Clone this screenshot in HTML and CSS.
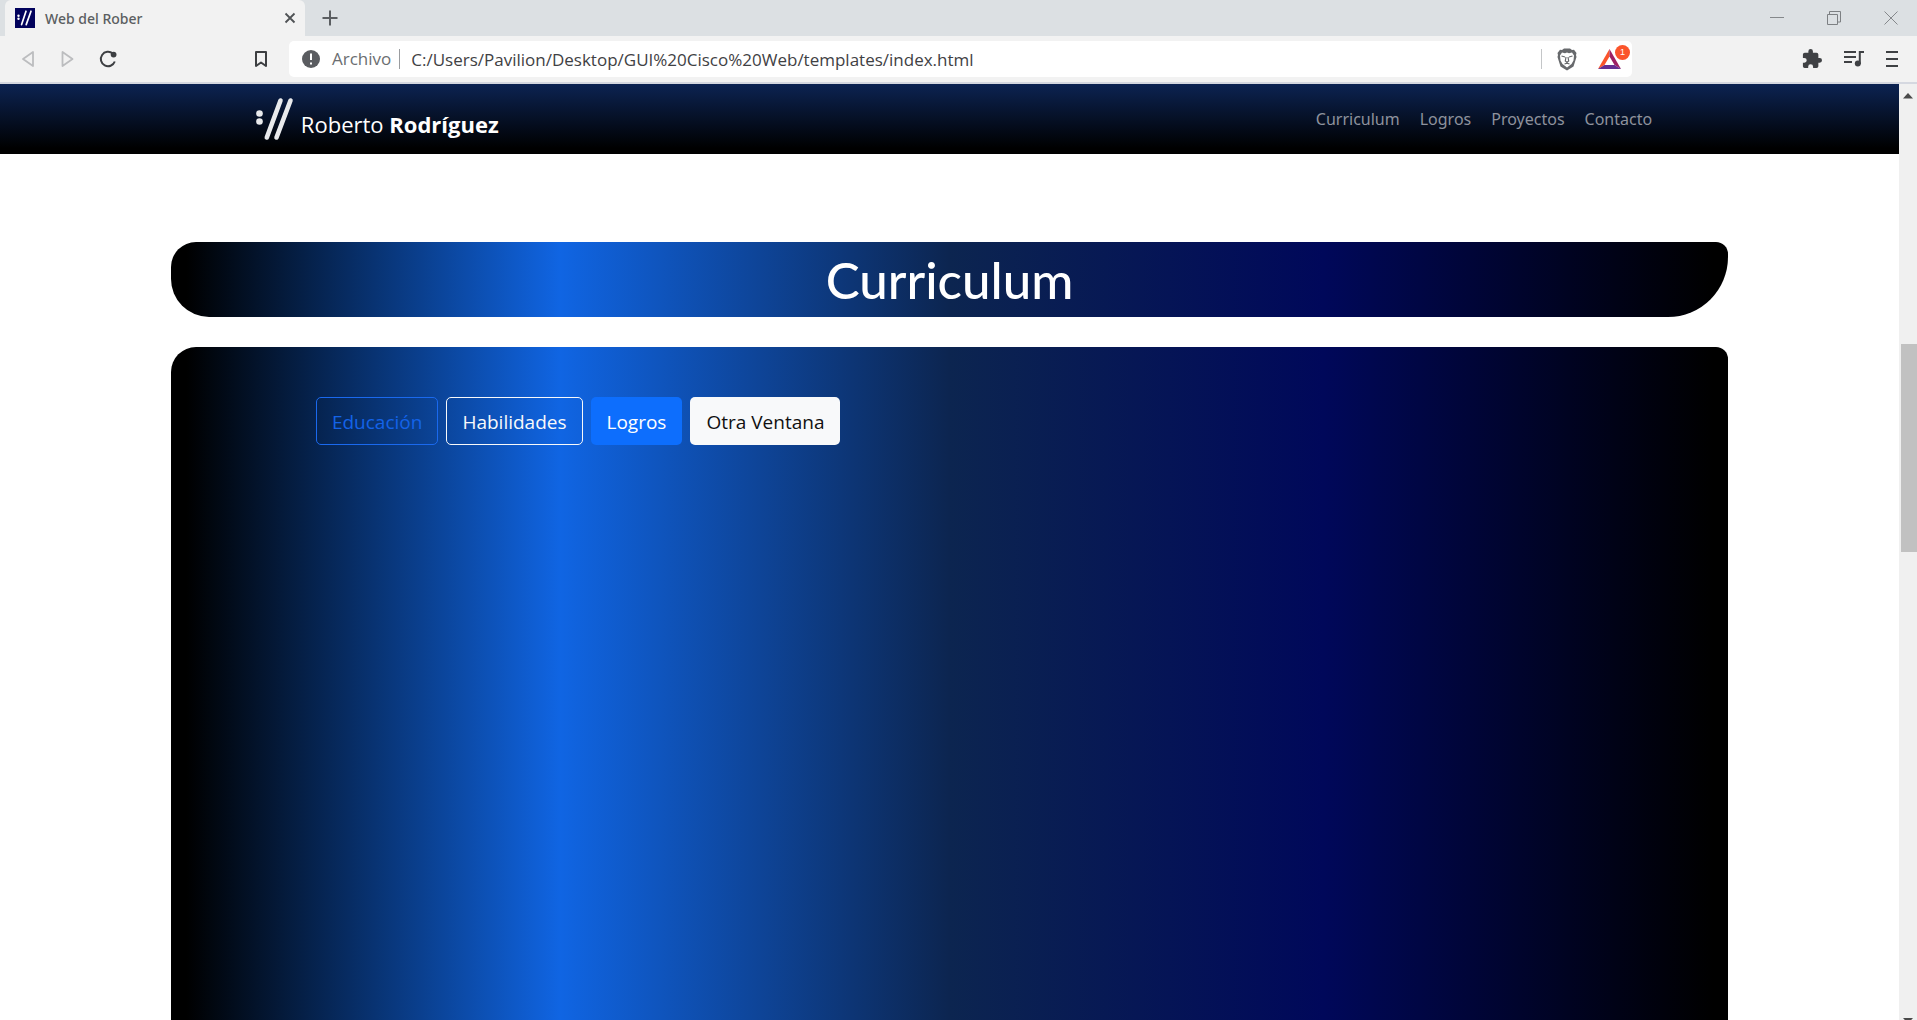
FILE: index.html
```html
<!DOCTYPE html>
<html lang="es">
<head>
<meta charset="utf-8">
<title>Web del Rober</title>
<link rel="stylesheet" href="styles.css">
</head>
<body>
<div class="window">
  <header class="browser">
    <div class="tabstrip">
      <div class="tab">
        <svg class="favicon" viewBox="0 0 20 20" width="20" height="20" aria-hidden="true"><rect width="20" height="20" fill="#02025c"/><g fill="#fff"><circle cx="3.500" cy="7.700" r="1.200"/><circle cx="3.500" cy="10.700" r="1.200"/></g><path d="M11 3.200L6.600 16.600M16 3.200L11.200 16.600" stroke="#fff" stroke-width="1.700" stroke-linecap="round"/></svg>
        <span class="tab-title">Web del Rober</span>
        <button class="icon-button" type="button" aria-label="Cerrar pestaña"><svg viewBox="0 0 12 12" width="12" height="12"><path d="M1.500 1.500l9 9M10.500 1.500l-9 9" stroke="#4f5255" stroke-width="1.800"/></svg></button>
      </div>
      <button class="icon-button new-tab" type="button" aria-label="Nueva pestaña"><svg viewBox="0 0 16 16" width="16" height="16"><path d="M8 .5v15M.5 8h15" stroke="#5b5e61" stroke-width="2"/></svg></button>
      <div class="window-controls">
        <button class="icon-button" type="button" aria-label="Minimizar"><svg viewBox="0 0 14 14" width="14" height="14"><path d="M0 6.500h14" stroke="#85888b"/></svg></button>
        <button class="icon-button" type="button" aria-label="Restaurar"><svg viewBox="0 0 14 14" width="14" height="14"><path d="M.5 3.500h10v10H.5zM2.500 3V.5h11v10.500H11" fill="none" stroke="#7d8083"/></svg></button>
        <button class="icon-button" type="button" aria-label="Cerrar"><svg viewBox="0 0 14 14" width="14" height="14"><path d="M.5.5l13 13M13.500.5l-13 13" stroke="#85888b"/></svg></button>
      </div>
    </div>
    <div class="toolbar">
      <div class="history">
        <button class="icon-button" type="button" aria-label="Atrás"><svg viewBox="0 0 14 18" width="14" height="18"><path d="M12 2v14L2 9z" fill="none" stroke="#bcbdbf" stroke-width="1.800" stroke-linejoin="round"/></svg></button>
        <button class="icon-button" type="button" aria-label="Adelante"><svg viewBox="0 0 14 18" width="14" height="18"><path d="M2.500 2v14l10-7z" fill="none" stroke="#bcbdbf" stroke-width="1.800" stroke-linejoin="round"/></svg></button>
        <button class="icon-button" type="button" aria-label="Recargar"><svg viewBox="0 0 18 18" width="18" height="18"><path d="M15.800 11.500A7.200 7.200 0 1 1 13.800 3.600" fill="none" stroke="#3d3f42" stroke-width="2"/><circle cx="14.600" cy="4.600" r="2.900" fill="#3d3f42"/></svg></button>
      </div>
      <button class="icon-button bookmark" type="button" aria-label="Marcador"><svg viewBox="0 0 14 18" width="14" height="18"><path d="M2 2h10v14l-5-3.500L2 16z" fill="none" stroke="#3d3f42" stroke-width="2" stroke-linejoin="round"/></svg></button>
      <div class="address">
        <svg viewBox="0 0 18 18" width="18" height="18" aria-hidden="true"><circle cx="9" cy="9" r="9" fill="#5a5c60"/><path d="M9 3.500v6.500M9 12.500v2" stroke="#fff" stroke-width="2"/></svg>
        <label class="scheme" for="url">Archivo</label>
        <input class="url" id="url" type="text" value="C:/Users/Pavilion/Desktop/GUI%20Cisco%20Web/templates/index.html">
        <div class="shields">
          <button class="icon-button" type="button" aria-label="Escudos"><svg viewBox="0 0 20 23" width="20" height="23"><path d="M5 2l2-1.500h6L15 2l2-.3L19.500 5 19 7l.5 2-3 9.500L10 22.500 3.500 18.500.5 9 1 7 .5 5 3 1.700z" fill="#67696c"/><path d="M5 4.500l3 .7 2-.7 2 .7 3-.7 2 3-.5 5L14.500 16 10 19.500 5.500 16 3.500 12.500 3 7.500z" fill="#fff"/><path d="M4.500 8l3.500 1M15.500 8L12 9M9 9l-.7 4L10 14.300l1.700-1.300L11 9M7.500 16l2.500-.8 2.500.8" stroke="#67696c" stroke-width="1.200" fill="none"/></svg></button>
          <button class="icon-button rewards" type="button" aria-label="Recompensas"><svg viewBox="0 0 23 20" width="23" height="20"><path d="M11.500 0L0 20l6.500-4 5-8.500z" fill="#fb542b"/><path d="M11.500 0L23 20l-6.500-4-5-8.500z" fill="#9e1f63"/><path d="M0 20h23l-6.500-4h-10z" fill="#662d91"/></svg><span class="badge">1</span></button>
        </div>
      </div>
      <div class="tools">
        <button class="icon-button" type="button" aria-label="Extensiones"><svg viewBox="1 1 22 22" width="20" height="20"><path d="M20.500 11H19V7a2 2 0 0 0-2-2h-4V3.500a2.500 2.500 0 0 0-5 0V5H4a2 2 0 0 0-2 2v3.800h1.500a2.700 2.700 0 0 1 0 5.400H2V20a2 2 0 0 0 2 2h3.800v-1.500a2.700 2.700 0 0 1 5.400 0V22H17a2 2 0 0 0 2-2v-4h1.500a2.500 2.500 0 0 0 0-5z" fill="#3f4144"/></svg></button>
        <button class="icon-button" type="button" aria-label="Multimedia"><svg viewBox="0 0 20 18" width="20" height="18"><path d="M0 2h12M0 7h12M0 12h8M15.800 14V2H20" fill="none" stroke="#3f4144" stroke-width="2"/><circle cx="13.800" cy="13.500" r="3" fill="#3f4144"/></svg></button>
        <button class="icon-button" type="button" aria-label="Menú"><svg viewBox="0 0 12 18" width="12" height="18"><path d="M0 2h12M0 9h12M0 16h12" stroke="#3f4144" stroke-width="2"/></svg></button>
      </div>
    </div>
  </header>
  <div class="viewport">
    <div class="page">
      <nav class="navbar">
        <a class="brand" href="#inicio">
          <svg viewBox="0 0 40 44" width="40" height="44" aria-hidden="true"><g fill="#e9eaec"><circle cx="4.500" cy="16.500" r="3.300"/><circle cx="4.500" cy="24.500" r="3.300"/></g><path d="M25.500 3.500L11.800 40.500M35.500 3.500L21.500 40.500" stroke="#e9eaec" stroke-width="4.600" stroke-linecap="round"/></svg>
          <span class="brand-name">Roberto <strong>Rodríguez</strong></span>
        </a>
        <div class="nav-links">
          <a href="#curriculum">Curriculum</a>
          <a href="#logros">Logros</a>
          <a href="#proyectos">Proyectos</a>
          <a href="#contacto">Contacto</a>
        </div>
      </nav>
      <main class="content" id="curriculum">
        <h1 class="banner">Curriculum</h1>
        <section class="panel">
          <button class="btn btn-outline-primary" type="button">Educación</button>
          <button class="btn btn-outline-light" type="button">Habilidades</button>
          <button class="btn btn-primary" type="button">Logros</button>
          <button class="btn btn-light" type="button">Otra Ventana</button>
        </section>
      </main>
    </div>
    <div class="scrollbar" aria-hidden="true">
      <svg class="arrow" viewBox="0 0 10 6" width="10" height="6"><path d="M0 5.500L5 0l5 5.500z" fill="#4a4a4a"/></svg>
      <div class="thumb"></div>
      <svg class="arrow arrow-down" viewBox="0 0 10 6" width="10" height="6"><path d="M0 0h10L5 5.500z" fill="#4a4a4a"/></svg>
    </div>
  </div>
</div>
</body>
</html>
```
FILE: styles.css
```css
* { box-sizing: border-box; }

body {
  margin: 0;
  font-family: "Noto Sans", "Open Sans", sans-serif;
  background: #fff;
}

.window {
  display: flex;
  flex-direction: column;
  height: 100vh;
  overflow: hidden;
}

.icon-button {
  display: flex;
  align-items: center;
  justify-content: center;
  padding: 0;
  border: 0;
  background: none;
}

/* Browser frame */
.browser {
  flex: none;
  background: #f2f2f2;
  border-bottom: 2px solid #d5d8e0;
}

.tabstrip {
  display: flex;
  align-items: center;
  height: 36px;
  padding-left: 5px;
  background: #dce0e3;
}

.tab {
  display: flex;
  align-items: center;
  gap: 10px;
  width: 300px;
  height: 36px;
  padding: 0 9px 0 10px;
  border-radius: 6px 6px 0 0;
  background: #f2f2f2;
}

.tab-title {
  flex: 1;
  font-size: 14px;
  font-weight: 500;
  color: #5b5e61;
}

.new-tab { margin-left: 17px; }

.window-controls {
  display: flex;
  gap: 43px;
  margin-left: auto;
  padding-right: 19px;
}

.toolbar {
  display: flex;
  align-items: center;
  height: 46px;
  padding: 0 19px 0 21px;
}

.history {
  display: flex;
  align-items: center;
  gap: 25px;
}

.bookmark { margin-left: 137px; }

.address {
  display: flex;
  flex: 1;
  align-items: center;
  height: 36px;
  margin-left: 21px;
  padding: 0 9px 0 13px;
  border-radius: 5px;
  background: #fff;
  font-family: "Open Sans", "Noto Sans", sans-serif;
  font-size: 17px;
}

.scheme {
  margin-left: 12px;
  padding-right: 8px;
  border-right: 1px solid #9a9c9f;
  line-height: 20px;
  color: #6b6e71;
}

.url {
  flex: 1;
  min-width: 0;
  margin-left: 11px;
  padding: 0;
  border: 0;
  background: none;
  font: inherit;
  color: #3f4144;
}

.shields {
  display: flex;
  align-items: center;
  gap: 21px;
  height: 20px;
  padding: 0 2px 0 15px;
  border-left: 1px solid #c4c6c8;
}

.rewards {
  position: relative;
  width: 23px;
}

.badge {
  position: absolute;
  top: -4px;
  right: -9px;
  width: 15px;
  height: 15px;
  border-radius: 8px;
  background: #fb542b;
  font-size: 9px;
  line-height: 15px;
  text-align: center;
  color: #fff;
}

.tools {
  display: flex;
  align-items: center;
  gap: 22px;
  margin-left: 170px;
}

/* Page area */
.viewport {
  display: flex;
  flex: 1;
  min-height: 0;
}

.page {
  display: flex;
  flex: 1;
  flex-direction: column;
  min-width: 0;
}

.scrollbar {
  display: flex;
  flex: none;
  flex-direction: column;
  align-items: center;
  width: 18px;
  padding: 9px 0 0;
  background: #f0f0f0;
  overflow: hidden;
}

.thumb {
  width: 16px;
  height: 208px;
  margin: 245px 0 auto;
  align-self: flex-end;
  background: #c1c1c1;
}

.arrow { flex: none; }
.arrow-down { margin-bottom: -4px; }

.navbar {
  display: flex;
  flex: none;
  align-items: center;
  justify-content: space-between;
  height: 70px;
  padding: 0 13%;
  background: linear-gradient(#0c2352, #000 92%);
}

.brand {
  display: flex;
  align-items: center;
  gap: 6px;
  padding-left: 8px;
  font-family: "Open Sans", "Noto Sans", sans-serif;
  font-size: 22px;
  color: #fff;
  text-decoration: none;
}

.brand-name { padding-top: 10px; }

.nav-links {
  display: flex;
  gap: 20px;
}

.nav-links a {
  font-size: 16px;
  line-height: 24px;
  color: #8e929d;
  text-decoration: none;
}

.content {
  display: flex;
  flex: 1;
  flex-direction: column;
  gap: 30px;
  min-height: 0;
  padding: 88px 9% 0;
}

.banner,
.panel {
  background: linear-gradient(90deg, #000 1%, #1065e3 25%, #0c2550 50%, #00085a 74%, #000 99%);
}

.banner {
  flex: none;
  height: 75px;
  margin: 0;
  border-radius: 25px 12px 60px 38px;
  font-family: Lato, "Noto Sans", sans-serif;
  font-size: 51px;
  font-weight: 500;
  line-height: 75px;
  text-align: center;
  color: #fff;
}

.panel {
  display: flex;
  flex: 1;
  align-items: flex-start;
  gap: 8px;
  padding: 50px 145px;
  border-radius: 25px 12px 0 0;
}

.btn {
  height: 48px;
  padding: 2px 15px 0;
  border: 1px solid transparent;
  border-radius: 5px;
  font-family: "Open Sans", "Noto Sans", sans-serif;
  font-size: 19px;
}

.btn-outline-primary { border-color: #1a69ee; background: none; color: #1463e8; }
.btn-outline-light { border-color: #f8f9fa; background: none; color: #f8f9fa; }
.btn-primary { background: #0d6efd; color: #fff; }
.btn-light { background: #f8f9fa; color: #111; }
```
